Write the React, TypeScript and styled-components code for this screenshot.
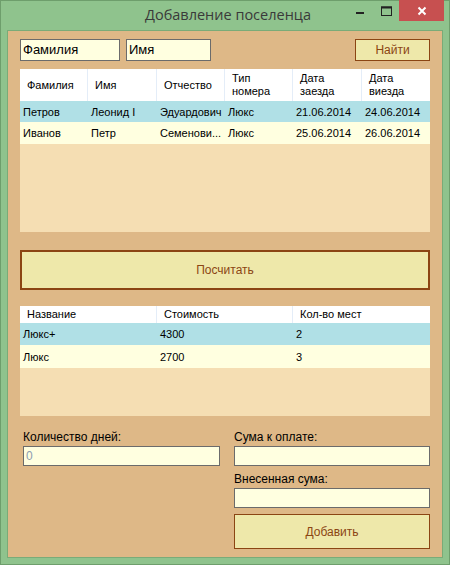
import styled, { createGlobalStyle } from "styled-components";

const GlobalStyle = createGlobalStyle`
  html, body {
    margin: 0;
    padding: 0;
    background: #ffffff;
  }
  * {
    box-sizing: border-box;
  }
`;

const Window = styled.div`
  width: 450px;
  height: 565px;
  background-color: #8fc38d;
  border: 1px solid #6e9e6c;
  display: flex;
  flex-direction: column;
  font-family: "Liberation Sans", Arial, sans-serif;
`;

const TitleBar = styled.div`
  height: 29px;
  display: flex;
  align-items: flex-start;
  position: relative;
`;

const Title = styled.div`
  flex: 1;
  text-align: center;
  font-family: "Open Sans", "Noto Sans", sans-serif;
  font-size: 14.5px;
  color: #3a3a3a;
  line-height: 28px;
  padding-left: 6px;
`;

const Controls = styled.div`
  position: absolute;
  top: -1px;
  right: 5px;
  display: flex;
  align-items: flex-start;
`;

const CtrlButton = styled.div<{ $close?: boolean }>`
  width: ${(p) => (p.$close ? "45px" : "26px")};
  height: 21px;
  display: flex;
  align-items: center;
  justify-content: center;
  background-color: ${(p) => (p.$close ? "#c75050" : "transparent")};
`;

const Client = styled.div`
  flex: 1;
  margin: 0 6px 6px 6px;
  border: 1px solid #7aab78;
  background-color: #deb887;
  padding: 8px 12px 0 12px;
  display: flex;
  flex-direction: column;
`;

const TopRow = styled.div`
  display: flex;
  align-items: center;
  gap: 6px;
  height: 22px;
`;

const TextBox = styled.div<{ $w?: number; $h?: number; $big?: boolean }>`
  width: ${(p) => (p.$w ? `${p.$w}px` : "100%")};
  height: ${(p) => p.$h ?? 22}px;
  background-color: #ffffe0;
  border: 1px solid #6b6b6b;
  font-size: ${(p) => (p.$big ? "13px" : "12px")};
  line-height: ${(p) => (p.$h ?? 22) - 2}px;
  padding-left: 2px;
  color: #000;
`;

const Placeholder = styled.span`
  color: #8c9db0;
`;

const Spacer = styled.div`
  flex: 1;
`;

const Button = styled.div<{ $w?: number; $h: number; $thick?: boolean }>`
  width: ${(p) => (p.$w ? `${p.$w}px` : "100%")};
  height: ${(p) => p.$h}px;
  background-color: #eee8aa;
  border: ${(p) => (p.$thick ? 2 : 1)}px solid #8b4513;
  color: #8b4513;
  font-size: 12px;
  display: flex;
  align-items: center;
  justify-content: center;
`;

const Grid = styled.div<{ $h: number; $mt: number }>`
  height: ${(p) => p.$h}px;
  margin-top: ${(p) => p.$mt}px;
  background-color: #f5deb3;
  font-size: 11px;
  color: #000;
  overflow: hidden;
`;

const Row = styled.div<{ $cols: string; $h: number; $bg: string }>`
  display: grid;
  grid-template-columns: ${(p) => p.$cols};
  height: ${(p) => p.$h}px;
  background-color: ${(p) => p.$bg};
`;

const HeadCell = styled.div`
  display: flex;
  align-items: center;
  padding-left: 7px;
  line-height: 13px;
  border-right: 1px solid #e4edf8;
  &:last-child {
    border-right: none;
  }
`;

const Cell = styled.div`
  display: flex;
  align-items: center;
  padding-left: 3px;
  white-space: nowrap;
  overflow: hidden;
`;

const Bottom = styled.div`
  display: grid;
  grid-template-columns: 197px 196px;
  column-gap: 14px;
  margin-left: 3px;
  margin-top: 14px;
`;

const Column = styled.div`
  display: flex;
  flex-direction: column;
`;

const Label = styled.div<{ $mt?: number }>`
  height: 16px;
  line-height: 15px;
  font-size: 12px;
  color: #000;
  margin-top: ${(p) => p.$mt ?? 0}px;
`;

const guests = [
  ["Петров", "Леонид I", "Эдуардович", "Люкс", "21.06.2014", "24.06.2014"],
  ["Иванов", "Петр", "Семенови...", "Люкс", "25.06.2014", "26.06.2014"],
];

const rooms = [
  ["Люкс+", "4300", "2"],
  ["Люкс", "2700", "3"],
];

const rowColors = ["#b0e0e6", "#ffffe0"];

const cols1 = "68px 69px 68px 68px 69px 68px";
const cols2 = "137px 136px 137px";

export default function App() {
  return (
    <>
      <GlobalStyle />
      <Window>
        <TitleBar>
          <Title>Добавление поселенца</Title>
          <Controls>
            <CtrlButton>
              <svg width="10" height="10" viewBox="0 0 10 10">
                <rect x="1" y="6" width="8" height="2" fill="#222" />
              </svg>
            </CtrlButton>
            <CtrlButton>
              <svg width="11" height="10" viewBox="0 0 11 10">
                <rect x="0.5" y="1" width="10" height="8.5" fill="none" stroke="#222" strokeWidth="1" />
                <rect x="0" y="0.5" width="11" height="2" fill="#222" />
              </svg>
            </CtrlButton>
            <CtrlButton $close>
              <svg width="10" height="10" viewBox="0 0 10 10">
                <path d="M1.5 1.5 L8.5 8.5 M8.5 1.5 L1.5 8.5" stroke="#fff" strokeWidth="2" />
              </svg>
            </CtrlButton>
          </Controls>
        </TitleBar>
        <Client>
          <TopRow>
            <TextBox $w={100} $big>Фамилия</TextBox>
            <TextBox $w={85} $big>Имя</TextBox>
            <Spacer />
            <Button $w={75} $h={22}>Найти</Button>
          </TopRow>

          <Grid $h={163} $mt={8}>
            <Row $cols={cols1} $h={32} $bg="#ffffff">
              <HeadCell>Фамилия</HeadCell>
              <HeadCell>Имя</HeadCell>
              <HeadCell>Отчество</HeadCell>
              <HeadCell>Тип<br />номера</HeadCell>
              <HeadCell>Дата<br />заезда</HeadCell>
              <HeadCell>Дата<br />виезда</HeadCell>
            </Row>
            {guests.map((g, i) => (
              <Row key={i} $cols={cols1} $h={i === 0 ? 21 : 22} $bg={rowColors[i]}>
                {g.map((v, j) => (
                  <Cell key={j}>{v}</Cell>
                ))}
              </Row>
            ))}
          </Grid>

          <div style={{ marginTop: 18 }}>
            <Button $h={40} $thick>Посчитать</Button>
          </div>

          <Grid $h={110} $mt={16}>
            <Row $cols={cols2} $h={17} $bg="#ffffff">
              <HeadCell>Название</HeadCell>
              <HeadCell>Стоимость</HeadCell>
              <HeadCell>Кол-во мест</HeadCell>
            </Row>
            {rooms.map((r, i) => (
              <Row key={i} $cols={cols2} $h={i === 0 ? 22 : 23} $bg={rowColors[i]}>
                {r.map((v, j) => (
                  <Cell key={j}>{v}</Cell>
                ))}
              </Row>
            ))}
          </Grid>

          <Bottom>
            <Column>
              <Label>Количество дней:</Label>
              <TextBox $h={20}>
                <Placeholder>0</Placeholder>
              </TextBox>
            </Column>
            <Column>
              <Label>Сума к оплате:</Label>
              <TextBox $h={20} />
              <Label $mt={6}>Внесенная сума:</Label>
              <TextBox $h={20} />
              <div style={{ marginTop: 6 }}>
                <Button $h={35}>Добавить</Button>
              </div>
            </Column>
          </Bottom>
        </Client>
      </Window>
    </>
  );
}
